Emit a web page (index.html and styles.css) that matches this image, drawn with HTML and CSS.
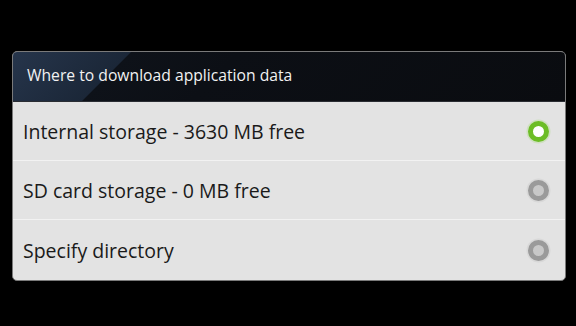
FILE: index.html
```html
<!DOCTYPE html>
<html>
<head>
<meta charset="utf-8">
<link rel="stylesheet" href="styles.css">
</head>
<body>
<div class="screen">
  <div class="dialog">
    <div class="title">Where to download application data</div>
    <ul class="options">
      <li class="option"><span class="label">Internal storage - 3630 MB free</span><span class="radio on"></span></li>
      <li class="option"><span class="label">SD card storage - 0 MB free</span><span class="radio"></span></li>
      <li class="option"><span class="label">Specify directory</span><span class="radio"></span></li>
    </ul>
  </div>
</div>
</body>
</html>
```
FILE: styles.css
```css
* { box-sizing: border-box; }
html, body { margin: 0; padding: 0; background: #000; }
body { width: 576px; height: 326px; overflow: hidden; font-family: "Open Sans", "DejaVu Sans", sans-serif; }
.screen { padding: 51px 10px 0 12px; }
.dialog {
  width: 554px;
  border: 1px solid #7a7a7a;
  border-radius: 5px;
  overflow: hidden;
  background: #e3e3e3;
}
.title {
  height: 50px;
  padding: 12px 0 0 14px;
  color: #f2f2f2;
  font-size: 15.7px;
  background: linear-gradient(135deg, #26354b 0px, #1b2738 83px, #0e1219 84px, #0c0f15 160px, #0a0c10 100%);
  border-bottom: 1px solid #2a2d33;
}
.options { list-style: none; margin: 0; padding: 0; }
.option {
  height: 59px;
  display: flex;
  align-items: center;
  justify-content: space-between;
  padding: 0 16px 0 10px;
  border-top: 1px solid #f2f2f2;
  color: #1a1a1a;
  font-size: 19.5px;
}
.option:first-child { border-top: none; height: 58px; }
.option:last-child { height: 61px; }
.radio {
  width: 21px;
  height: 21px;
  border-radius: 50%;
  border: 5.5px solid #9a9a9a;
  background: #c8c8c8;
  box-shadow: 0 0 0 1.5px #d8d8d8;
}
.radio.on { border-color: #6cbd26; background: #fff; box-shadow: 0 0 0 1.5px #cfe0c0; }
```
